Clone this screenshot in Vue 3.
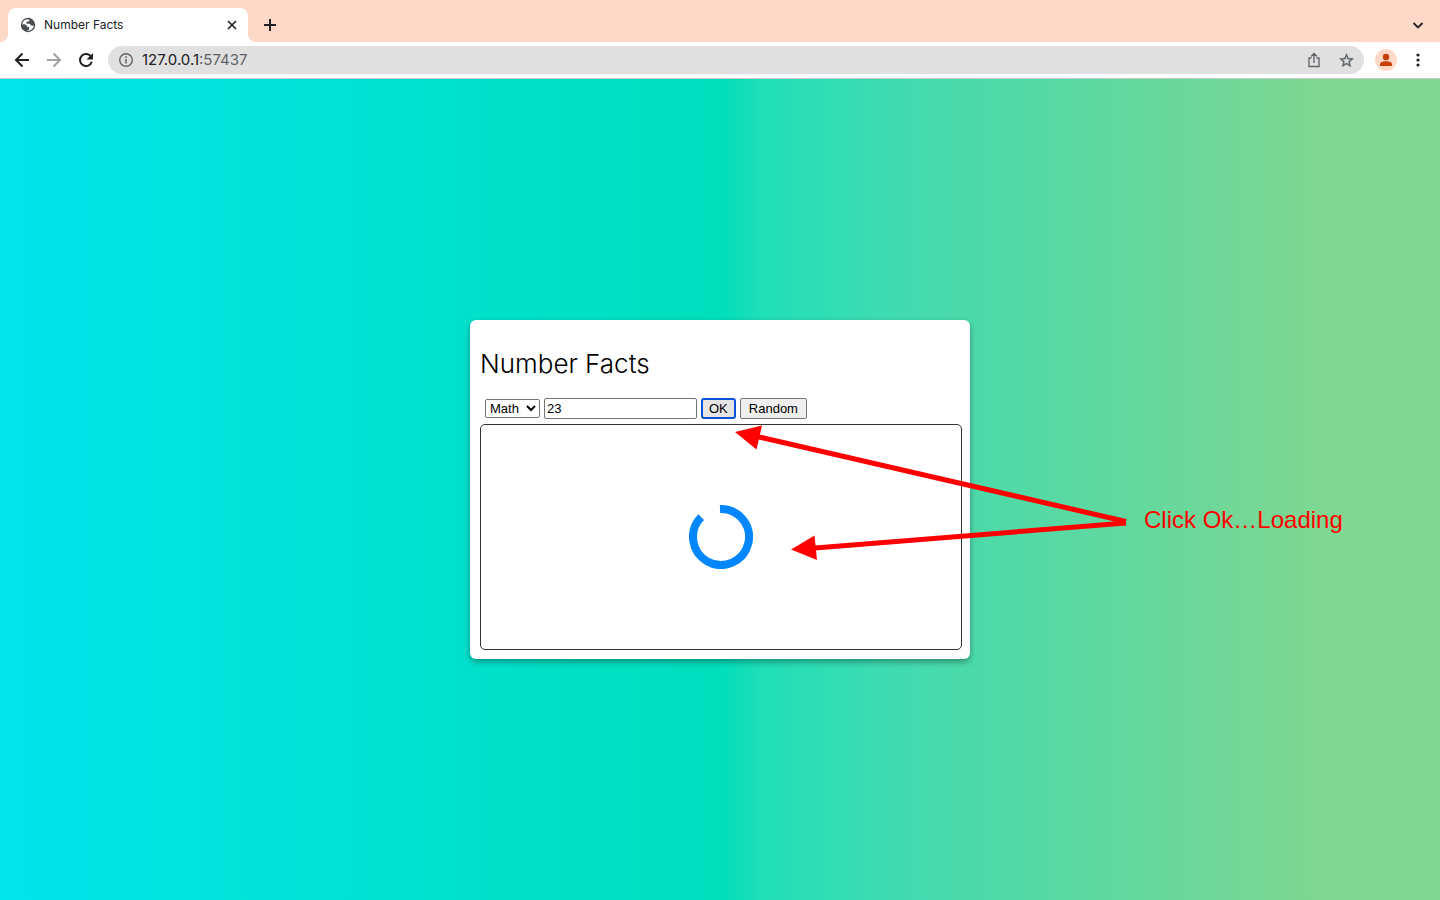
<script setup>
import { ref } from 'vue'

const category = ref('Math')
const number = ref('23')
const address = ref('127.0.0.1:57437')
</script>

<template>
  <div class="browser">
    <header class="tab-strip">
      <div class="tab">
        <svg class="globe" viewBox="0 0 24 24" aria-hidden="true">
          <circle cx="12" cy="12" r="10.800" fill="#4a4d51" />
          <path d="M11 3.500C6.500 4 3.500 7.500 3.300 11.500c2-.7 4.500-.8 6 .5 1 1 .5 2.300 2 2.500 1.500.2 2.300.2 2.300 1.700v2c0 1-1 1.300-2.300 1.300v1.200c5.200 0 9-3.700 9.400-8.400-1.400 1.200-3 1.200-4.500.2-1-.8-.5-2-2-2.300h-3.200c-1 0-1.500-.7-1.500-1.600 0-1.100.8-1.800 1.900-1.800h1.400c.8 0 1.200-.6 1.200-1.400V4z" fill="#fff" />
        </svg>
        <span class="tab-title">Number Facts</span>
        <button class="icon-btn close" aria-label="Close tab">
          <svg viewBox="0 0 12 12" width="12" height="12"><path d="M2 2l8 8M10 2l-8 8" stroke="#202124" stroke-width="1.7" /></svg>
        </button>
      </div>
      <button class="icon-btn new-tab" aria-label="New tab">
        <svg viewBox="0 0 14 14" width="14" height="14"><path d="M7 1v12M1 7h12" stroke="#202124" stroke-width="2" /></svg>
      </button>
      <button class="icon-btn tab-search" aria-label="Search tabs">
        <svg viewBox="0 0 12 12" width="12" height="12"><path d="M1.500 4l4.500 4.500L10.500 4" fill="none" stroke="#202124" stroke-width="1.800" /></svg>
      </button>
    </header>

    <nav class="toolbar">
      <button class="icon-btn" aria-label="Back">
        <svg viewBox="0 0 16 16" width="16" height="16"><path d="M15 8H2.500M8.500 1.500L2 8l6.500 6.500" fill="none" stroke="#202124" stroke-width="2" /></svg>
      </button>
      <button class="icon-btn" aria-label="Forward">
        <svg viewBox="0 0 16 16" width="16" height="16"><path d="M1 8h12.500M7.500 1.500L14 8l-6.500 6.500" fill="none" stroke="#a0a2a5" stroke-width="2" /></svg>
      </button>
      <button class="icon-btn" aria-label="Reload">
        <svg viewBox="0 0 16 16" width="16" height="16">
          <path d="M13.200 5A6 6 0 1 0 13.800 9.700" fill="none" stroke="#202124" stroke-width="2" />
          <path d="M15 1v6.500H8.500z" fill="#202124" />
        </svg>
      </button>
      <div class="omnibox">
        <svg viewBox="0 0 14 14" width="14" height="14" aria-hidden="true">
          <circle cx="7" cy="7" r="6.300" fill="none" stroke="#5f6368" stroke-width="1.400" />
          <path d="M7 6v4.500M7 3.300v1.600" stroke="#5f6368" stroke-width="1.500" />
        </svg>
        <label class="url">
          <span class="url-text" aria-hidden="true">127.0.0.1<span class="port">:57437</span></span>
          <input v-model="address" class="url-input" aria-label="Address" />
        </label>
        <button class="icon-btn" aria-label="Share">
          <svg viewBox="0 0 14 16" width="14" height="16"><path d="M4.500 6H2v8.500h10V6H9.500M7 11V2M4 4.500l3-3 3 3" fill="none" stroke="#5f6368" stroke-width="1.300" /></svg>
        </button>
        <button class="icon-btn" aria-label="Bookmark this page">
          <svg viewBox="0 0 24 24" width="17" height="17"><path fill="#5f6368" stroke="#5f6368" stroke-width=".5" d="M22 9.240l-7.190-.62L12 2 9.190 8.630 2 9.240l5.460 4.730L5.820 21 12 17.270 18.180 21l-1.630-7.030L22 9.240zM12 15.400l-3.760 2.270 1-4.280-3.320-2.880 4.380-.38L12 6.100l1.710 4.040 4.380.38-3.320 2.880 1 4.280L12 15.400z" /></svg>
        </button>
      </div>
      <button class="icon-btn profile" aria-label="Profile">
        <svg viewBox="0 0 14 14" width="14" height="14"><circle cx="7" cy="4" r="3.200" fill="#c93f00" /><path d="M1 13v-1.800C1 9 4.500 8.200 7 8.200s6 .8 6 3V13z" fill="#c93f00" /></svg>
      </button>
      <button class="icon-btn" aria-label="Menu">
        <svg viewBox="0 0 4 14" width="4" height="14" fill="#202124"><circle cx="2" cy="2" r="1.600" /><circle cx="2" cy="7" r="1.600" /><circle cx="2" cy="12" r="1.600" /></svg>
      </button>
    </nav>

    <main class="page">
      <section class="card">
        <h1>Number Facts</h1>
        <form class="controls" @submit.prevent>
          <select v-model="category" aria-label="Category">
            <option>Math</option>
            <option>Trivia</option>
            <option>Date</option>
            <option>Year</option>
          </select>
          <input v-model="number" type="text" aria-label="Number" />
          <button class="ok" type="submit">OK</button>
          <button type="button">Random</button>
        </form>
        <div class="result" role="status" aria-label="Loading">
          <svg viewBox="0 0 64 64" width="64" height="64">
            <path d="M31 4A28 28 0 1 1 12.200 12.200" fill="none" stroke="#0087ff" stroke-width="8" />
          </svg>
        </div>
        <div class="note">
          <svg viewBox="0 0 392 140" width="392" height="140" aria-hidden="true">
            <path d="M22 16.500L391 101.500M80 128L391 103" stroke="#f00" stroke-width="5" fill="none" />
            <path d="M0 12L27 5.500L21.500 29.500zM56 129.500L79.500 115.500L82 140z" fill="#f00" />
          </svg>
          <span>Click Ok…Loading</span>
        </div>
      </section>
    </main>
  </div>
</template>

<style>
body {
  margin: 0;
}
</style>

<style scoped>
.browser {
  display: flex;
  flex-direction: column;
  min-height: 100vh;
  font-family: Inter, "Liberation Sans", sans-serif;
  color: #202124;
}
.icon-btn {
  display: flex;
  align-items: center;
  justify-content: center;
  flex: none;
  width: 20px;
  height: 20px;
  padding: 0;
  border: 0;
  background: none;
}
.tab-strip {
  display: flex;
  align-items: center;
  height: 42px;
  padding: 0 12px 0 8px;
  background: #ffd9c7;
}
.tab {
  position: relative;
  display: flex;
  align-items: center;
  align-self: flex-end;
  box-sizing: border-box;
  width: 240px;
  height: 34px;
  padding: 0 6px 0 12px;
  border-radius: 8px 8px 0 0;
  background: #fff;
}
.tab::before,
.tab::after {
  content: "";
  position: absolute;
  bottom: 0;
  width: 8px;
  height: 8px;
}
.tab::before {
  right: 100%;
  background: radial-gradient(circle at 0 0, #ffd9c7 8px, #fff 8px);
}
.tab::after {
  left: 100%;
  background: radial-gradient(circle at 100% 0, #ffd9c7 8px, #fff 8px);
}
.globe {
  width: 16px;
  height: 16px;
}
.tab-title {
  flex: 1;
  margin-left: 8px;
  padding-bottom: 2px;
  font-size: 12px;
}
.new-tab {
  margin: 8px 0 0 12px;
}
.tab-search {
  margin: 8px 0 0 auto;
}
.toolbar {
  display: flex;
  align-items: center;
  gap: 12px;
  height: 36px;
  padding: 0 12px;
  border-bottom: 1px solid #c9c9c9;
  background: #fff;
}
.omnibox {
  display: flex;
  flex: 1;
  align-items: center;
  gap: 12px;
  height: 28px;
  padding: 0 8px 0 11px;
  border-radius: 14px;
  background: #e0e0e0;
}
.url {
  position: relative;
  flex: 1;
  margin-left: -3px;
  font-size: 15px;
  line-height: 20px;
}
.port {
  color: #5f6368;
}
.url-input {
  position: absolute;
  inset: 0;
  width: 100%;
  padding: 0;
  border: 0;
  background: none;
  color: transparent;
  font: inherit;
}
.profile {
  width: 22px;
  height: 22px;
  margin: 0 -1px;
  border-radius: 50%;
  background: #ffd9c7;
}
.page {
  display: flex;
  flex: 1;
  align-items: center;
  justify-content: center;
  overflow: hidden;
  background: linear-gradient(90deg, #00e5eb 0%, #00dfbc 50%, #20dfb8 53%, #40dbb0 62%, #7dd691 91%, #80d792 100%);
}
.card {
  position: relative;
  box-sizing: border-box;
  width: 500px;
  padding: 10px 8px 9px 10px;
  border-radius: 6px;
  background: #fff;
  box-shadow: 0 3px 6px rgba(0, 0, 0, 0.35);
}
h1 {
  margin: 20px 0;
  color: #000;
  font-family: Inter, sans-serif;
  font-size: 26px;
  font-weight: 300;
  line-height: 28px;
}
.controls {
  display: flex;
  align-items: center;
  gap: 4px;
  padding: 0 5px;
}
.controls select,
.controls input,
.controls button {
  box-sizing: border-box;
  height: 21px;
  margin: 0;
  border: 1px solid #767676;
  border-radius: 2px;
  color: #000;
  font: 13px/15px "Liberation Sans", Arial, sans-serif;
}
.controls select {
  width: 55px;
  height: 19px;
  padding: 0;
  background: #fff;
}
.controls input {
  width: 153px;
  padding: 1px 2px;
}
.controls button {
  padding: 1px 8px;
  background: #efefef;
}
.controls .ok {
  padding: 0 6px;
  border: 2px solid #0a53d6;
  border-radius: 3px;
  background: #e5e5e5;
}
.result {
  display: flex;
  align-items: center;
  justify-content: center;
  box-sizing: border-box;
  height: 226px;
  margin-top: 5px;
  border: 1px solid #333;
  border-radius: 5px;
}
.note {
  position: absolute;
  top: 100px;
  left: 265px;
  display: flex;
  align-items: center;
  gap: 17px;
  color: #f00;
  font: 24px/28px "Liberation Sans", Helvetica, sans-serif;
  white-space: nowrap;
  pointer-events: none;
}
.note span {
  margin-top: 59px;
}
</style>
